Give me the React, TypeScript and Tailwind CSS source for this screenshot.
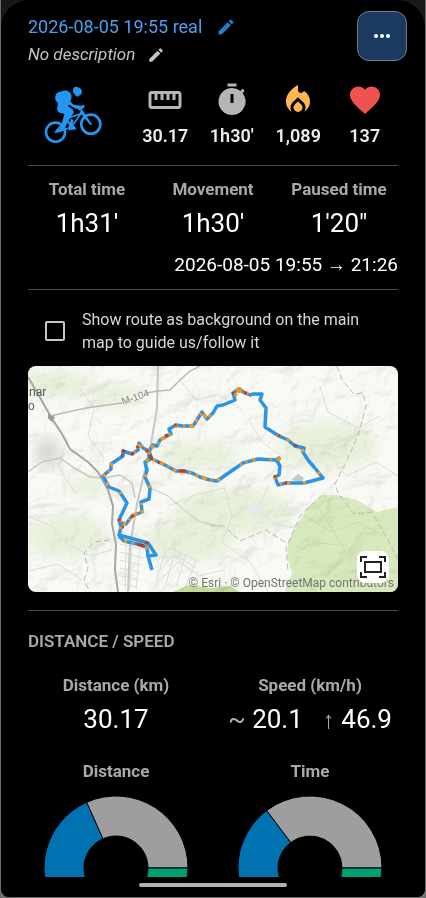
import type { ReactNode } from "react";
import {
  MdEdit,
  MdFavorite,
  MdLocalFireDepartment,
  MdStraighten,
  MdTimer,
} from "react-icons/md";

const STATS: { label: string; value: string; icon: ReactNode }[] = [
  { label: "Distance", value: "30.17", icon: <MdStraighten className="text-[#b5b5b5]" /> },
  { label: "Duration", value: "1h30'", icon: <MdTimer className="text-[#b5b5b5]" /> },
  { label: "Calories", value: "1,089", icon: <MdLocalFireDepartment className="text-[#ffb74d]" /> },
  { label: "Heart rate", value: "137", icon: <MdFavorite className="text-[#ef5350]" /> },
];

const TIMES = [
  { label: "Total time", value: "1h31'" },
  { label: "Movement", value: "1h30'" },
  { label: "Paused time", value: "1'20\"" },
];

// split = angle in degrees where the blue slice ends
const CHARTS = [
  { title: "Distance", split: 114 },
  { title: "Time", split: 127 },
];

const ROUTE = [
  "M121 85L125 79L129 80L132 74L139 70L143 68L141 63L148 59L154 60L165 60L169 54L174 46L179 53L185 47L189 40L195 39L207 34L205 27L211 23L217 27L222 29L225 28L234 28L232 34L238 42L237 61L251 70L260 74L267 80L276 82L275 86L280 94L286 101L295 112L276 117L258 117L250 119L247 111L251 109L252 100L249 95L251 92L247 94L230 93L215 97L189 115L182 114L172 111L164 107L155 105L148 105L135 98L124 93Z",
  "M121 85L115 82L111 77L110 84L104 88L95 85L95 90L83 98L83 103L75 110L81 121L91 125L99 137L91 154L93 161L91 169L120 177L128 189L120 190L124 204",
  "M91 170L96 175L109 178L119 181L120 190",
  "M93 157L98 158L104 150L114 146L113 136L121 133L122 122L117 111L119 104L117 96L121 94L121 85",
];

const ROUTE_ORANGE = [
  "M123 81L129 80L132 74L139 70L143 68",
  "M147 60L154 60L165 60L169 54L174 46L179 53L185 47",
  "M207 30L211 23L217 27L225 28",
  "M249 69L254 71M259 73L262 76M274 83L275 87M290 106L294 111M278 117L273 117M262 117L252 118M246 113L248 109",
  "M251 92L247 94L238 93M227 93L212 99M192 113L185 115L172 111L164 107L148 105L135 98L124 93",
  "M121 85L115 82L111 77L110 84L106 87",
  "M83 97L83 103L75 110M78 117L83 121M92 126L93 128M92 153L93 166",
  "M96 175L109 178L119 181L120 188",
  "M95 157L98 158L104 150L114 146L113 136M121 122L122 118M117 111L119 104M118 95L121 92L121 85",
];

const ROUTE_RED = [
  "M137 70L140 69M147 60L148 58M204 28L206 27M216 27L219 27M250 69L252 70M266 79L269 80M246 111L248 110M257 117L259 117",
  "M151 105L158 105M130 96L132 97M118 84L120 86M122 89L124 94M94 84L97 86M93 89L95 90M103 87L106 88M109 82L110 80",
  "M91 153L92 155M103 150L106 150M109 178L116 180M117 177L120 177M94 161L96 161",
];

function Divider() {
  return <hr className="border-0 border-t border-solid border-[#48484a]" />;
}

function BikeIcon() {
  return (
    <svg viewBox="12 14 176 174" className="size-[58px]" fill="none" aria-label="Mountain bike" role="img">
      <g stroke="#2196f3" strokeLinecap="round" strokeLinejoin="round">
        <circle cx="47" cy="153" r="29" strokeWidth="8" />
        <circle cx="154" cy="129" r="29" strokeWidth="8" />
        <path d="M47 153L80 112L124 97L94 139L47 153" strokeWidth="5" />
        <path d="M80 112L96 140M154 129L123 83M124 92L154 129" strokeWidth="6" />
        <path d="M118 84L133 73" strokeWidth="6" />
        <path d="M90 145L108 141" strokeWidth="5" />
      </g>
      <g fill="#2196f3">
        <path d="M46 50C45 38 54 30 66 29C73 25 84 25 90 32C95 36 97 43 95 50L92 59L101 69L121 73L132 72C136 75 134 81 129 82L108 82L88 70L84 74L99 84C103 88 103 93 100 98L87 118L72 147L58 153L55 148L64 137L69 115L74 98L60 94C51 91 51 82 53 74L54 63C48 60 46 56 46 50Z" />
        <path d="M100 23L104 16C111 13 121 18 126 24C128 30 127 36 122 40L113 46L105 39L100 31Z" />
        <path d="M94 112L102 116L98 133L106 136L107 146L90 145L86 138Z" />
      </g>
    </svg>
  );
}

function RouteMap() {
  return (
    <svg viewBox="0 0 370 226" className="block w-full" role="img" aria-label="Map of the recorded route">
      <defs>
        <filter id="relief" x="0" y="0" width="100%" height="100%" colorInterpolationFilters="sRGB">
          <feTurbulence type="fractalNoise" baseFrequency="0.03 0.034" numOctaves="4" seed="8" />
          <feColorMatrix values="0 0 0 0 0  0 0 0 0 0  0 0 0 0 0  1 0 0 0 0" />
          <feDiffuseLighting surfaceScale="8" diffuseConstant="1.1" lightingColor="#ffffff">
            <feDistantLight azimuth="225" elevation="66" />
          </feDiffuseLighting>
        </filter>
        <filter id="soft">
          <feGaussianBlur stdDeviation="7" />
        </filter>
      </defs>

      {/* terrain */}
      <rect width="370" height="226" fill="#f9faf6" />
      <g fill="#e8f0da" filter="url(#soft)">
        <ellipse cx="25" cy="18" rx="42" ry="14" />
        <ellipse cx="38" cy="170" rx="42" ry="22" />
        <ellipse cx="60" cy="120" rx="22" ry="10" />
        <ellipse cx="160" cy="175" rx="45" ry="22" />
        <ellipse cx="205" cy="145" rx="60" ry="24" />
        <ellipse cx="170" cy="90" rx="40" ry="14" />
        <ellipse cx="300" cy="80" rx="50" ry="24" />
        <ellipse cx="90" cy="30" rx="26" ry="12" />
      </g>
      <path
        d="M370 141L349 146L329 134L309 129L294 129L282 139L272 154L260 176L259 191L264 207L257 226H370Z"
        fill="#d8eabd"
      />
      <path d="M145 226L160 219L184 222L202 220L212 226Z" fill="#bfdc9a" />
      <rect width="370" height="226" filter="url(#relief)" opacity="0.14" className="mix-blend-multiply" />

      {/* tracks and streets */}
      <g fill="none" stroke="#dcdcdc">
        <path d="M0 150L24 160L40 178L62 190L84 184M0 205L30 198L54 214M52 22L66 42L60 70L76 92M150 12L168 34L190 28L214 44M196 120L204 150L194 176L222 196L240 226M292 20L300 46L330 62L352 50M300 86L318 110L348 96L370 110M140 140L170 128L196 122M240 120L230 142L246 158L268 162M146 190L170 210L196 204M20 52L40 74L30 100L48 128M222 56L234 76L254 90" />
        <path d="M276 150L304 166L330 156L356 170M284 176L318 180L336 204L362 198M290 140L320 190M300 210L340 160" stroke="#c9d8b4" />
        <path d="M92 178L120 184M92 186L116 192M92 194L114 199M92 202L112 206M93 210L111 214M94 218L110 221M98 176L97 224M104 178L102 224M112 181L108 224" />
        <path d="M128 196L142 182L172 196M132 204L146 188L168 202M134 212L150 196L170 208M138 184L128 214M148 182L138 218M158 188L148 220M168 194L158 220" />
      </g>
      <path d="M6 82L16 70L28 74L34 88L24 104L8 96Z" fill="#cfcfcd" opacity="0.8" filter="url(#soft)" />
      <path d="M220 142L228 136L236 140L234 150L224 152Z" fill="#e8e8e6" />
      <path d="M263 114L270 108L276 112L274 116Z" fill="#c8c8c6" />

      {/* roads and railway */}
      <g fill="none">
        <path d="M130 0L129 42L123 78L109 138L102 180L100 226" stroke="#c6c6c3" strokeWidth="2" />
        <path d="M22 50L58 42L94 37M118 27L130 25L142 24L150 16L162 5L172 0" stroke="#b9b9b7" strokeWidth="1.5" />
        <path d="M0 106L14 96L32 92L48 103L62 111L76 112L92 109L104 117L107 132" stroke="#c8c7c3" strokeWidth="1.5" />
        <path d="M122 122L140 130L156 144L172 156L192 160" stroke="#c7c7c4" />
        <path d="M0 11L10 28L23 51L34 68L42 83L60 96L70 106L80 124L85 140L84 158L88 178L87 204L90 226" stroke="#a6a6a6" strokeWidth="2" />
        <path d="M20 48L27 51L24 56L20 52Z" fill="#999999" />
        <path
          d="M82 174L66 176L56 187L60 202L56 214L62 226M182 160L196 160L212 175L238 164L260 178M309 0L314 14L326 28L335 27L338 40L330 70L320 92L307 118L310 127L326 148L344 146L360 174L370 194M294 129L272 150L258 182L260 204"
          stroke="#b9b9b6"
          strokeDasharray="6 3"
        />
      </g>

      <g fontFamily="'Liberation Sans', Arial, sans-serif" fill="#55555a">
        <text x="1" y="30" fontSize="12">nar</text>
        <text x="0" y="44" fontSize="12">o</text>
        <text x="95" y="39" fontSize="10" fill="#8a8a8a" transform="rotate(-19 95 39)">M-104</text>
      </g>

      {/* recorded track, coloured by speed */}
      <g fill="none" strokeLinejoin="round">
        {ROUTE.map((d) => (
          <path key={d} d={d} stroke="#2d93e6" strokeWidth="3.5" />
        ))}
        {ROUTE_ORANGE.map((d) => (
          <path key={d} d={d} stroke="#f39a1d" strokeWidth="3.5" strokeDasharray="3 5 2 4 5 4" />
        ))}
        {ROUTE_RED.map((d) => (
          <path key={d} d={d} stroke="#c0392b" strokeWidth="3" />
        ))}
      </g>
      <circle cx="211" cy="24" r="3" fill="#f0931e" />
      <circle cx="251" cy="93" r="2" fill="#f0931e" />
    </svg>
  );
}

function point(radius: number, degrees: number) {
  const a = (degrees * Math.PI) / 180;
  return `${73 + radius * Math.cos(a)} ${73 - radius * Math.sin(a)}`;
}

function slice(from: number, to: number) {
  return `M${point(72, from)}A72 72 0 0 0 ${point(72, to)}L${point(32, to)}A32 32 0 0 1 ${point(32, from)}Z`;
}

function Donut({ title, split }: { title: string; split: number }) {
  return (
    <svg viewBox="0 0 146 82" className="mt-3 h-[82px] w-[146px]" role="img" aria-label={`${title} chart`}>
      <g stroke="#000000" strokeWidth="1">
        <path d={slice(split, 220)} fill="#0072b2" />
        <path d={slice(0, split)} fill="#9e9e9e" />
        <path d={slice(-40, 0)} fill="#009e73" />
      </g>
    </svg>
  );
}

export default function App() {
  return (
    <div className="flex min-h-screen flex-col bg-[#6e6e6e] px-px pb-px font-['Roboto',sans-serif] text-white">
      <div className="flex grow flex-col rounded-b-lg bg-[#17181a]">
        <main className="relative flex grow flex-col rounded-t-[28px] rounded-b-lg bg-black px-[27px] pb-[10px]">
          <header className="pt-[13px]">
            <div className="flex h-7 items-center gap-[14px]">
              <h1 className="text-lg text-[#4a9ff0]">2026-08-05 19:55 real</h1>
              <button type="button" aria-label="Edit title" className="text-xl text-[#1f7fd0]">
                <MdEdit />
              </button>
            </div>
            <div className="flex h-7 items-center gap-3">
              <p className="text-[17px] text-[#c4c4c4] italic">No description</p>
              <button type="button" aria-label="Edit description" className="text-lg text-[#c4c4c4]">
                <MdEdit />
              </button>
            </div>
          </header>
          <button
            type="button"
            aria-label="More options"
            className="absolute top-[11px] right-[18px] flex size-[50px] items-center justify-center gap-[2px] rounded-xl border border-[#77797d] bg-[#1b3a5f]"
          >
            <span className="size-1 rounded-full bg-white" />
            <span className="size-1 rounded-full bg-white" />
            <span className="size-1 rounded-full bg-white" />
          </button>

          <section className="mt-[13px] mb-[17px] flex">
            <div className="flex w-[104px] shrink-0 items-center pl-4">
              <BikeIcon />
            </div>
            <ul className="grid grow grid-cols-4">
              {STATS.map((stat) => (
                <li key={stat.label} className="flex flex-col items-center gap-[6px]">
                  <span className="text-4xl" aria-hidden="true">
                    {stat.icon}
                  </span>
                  <span className="text-lg leading-6 font-semibold text-[#ececec]">{stat.value}</span>
                </li>
              ))}
            </ul>
          </section>
          <Divider />

          <section className="mt-[11px] mb-3">
            <dl className="grid grid-cols-3 gap-2 text-center">
              {TIMES.map((time) => (
                <div key={time.label}>
                  <dt className="text-[17px] leading-6 font-bold text-[#a9a9a9]">{time.label}</dt>
                  <dd className="mt-1 text-[26px] leading-9">{time.value}</dd>
                </div>
              ))}
            </dl>
            <p className="mt-3 text-right text-[19px] leading-6">2026-08-05 19:55 → 21:26</p>
          </section>
          <Divider />

          <label className="mt-[18px] flex items-center gap-[17px] pl-[17px]">
            <input
              type="checkbox"
              className="size-5 shrink-0 appearance-none rounded-[2px] border-2 border-[#c8c5cc] bg-transparent checked:bg-[#2196f3]"
            />
            <span className="max-w-[300px] text-base leading-[23px] text-[#d6d6d6]">
              Show route as background on the main map to guide us/follow it
            </span>
          </label>

          <section className="relative mt-3 mb-[18px] overflow-hidden rounded-lg">
            <RouteMap />
            <p className="absolute right-1 bottom-0 text-xs leading-[18px] text-[#73776f]">
              © Esri · © OpenStreetMap contributors
            </p>
            <button
              type="button"
              aria-label="Fit route to map"
              className="absolute right-[9px] bottom-[9px] flex size-8 items-center justify-center rounded-lg bg-white"
            >
              <svg viewBox="0 0 26 22" className="h-[22px] w-[26px]" fill="none" stroke="#202124" strokeWidth="2">
                <path d="M1 6V1H7M19 1H25V6M25 16V21H19M7 21H1V16" />
                <rect x="5" y="6" width="16" height="10" />
              </svg>
            </button>
          </section>
          <Divider />

          <section className="mt-[18px]">
            <h2 className="text-[17px] leading-6 font-semibold text-[#a9a9a9]">DISTANCE / SPEED</h2>
            <dl className="mt-5 grid grid-cols-2 gap-[18px] text-center">
              <div>
                <dt className="text-[17px] leading-6 font-bold text-[#a9a9a9]">Distance (km)</dt>
                <dd className="mt-1 text-[26px] leading-9">30.17</dd>
              </div>
              <div>
                <dt className="text-[17px] leading-6 font-bold text-[#a9a9a9]">Speed (km/h)</dt>
                <dd className="mt-1 flex justify-center gap-5 text-[26px] leading-9 whitespace-nowrap">
                  <span>
                    <span className="text-[#b0b0b0]">~</span> 20.1
                  </span>
                  <span>
                    <span className="text-2xl text-[#b0b0b0]">↑</span> 46.9
                  </span>
                </dd>
              </div>
            </dl>
            <div className="mt-[22px] grid grid-cols-2 gap-[18px]">
              {CHARTS.map((chart) => (
                <div key={chart.title} className="flex flex-col items-center">
                  <h3 className="text-[17px] leading-6 font-bold text-[#a9a9a9]">{chart.title}</h3>
                  <Donut title={chart.title} split={chart.split} />
                </div>
              ))}
            </div>
          </section>

          <div className="mt-[6px] h-1 w-[148px] self-center rounded-full bg-[#b3b3b3]" />
        </main>
      </div>
    </div>
  );
}
